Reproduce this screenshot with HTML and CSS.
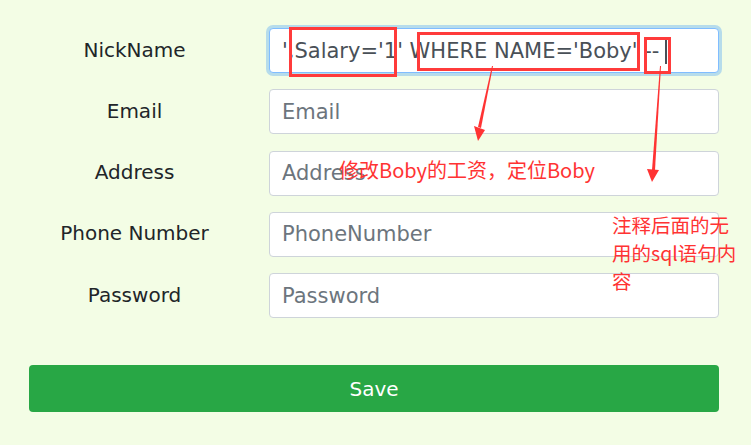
FILE: index.html
```html
<!DOCTYPE html>
<html>
<head>
<meta charset="utf-8">
<link rel="stylesheet" href="styles.css">
</head>
<body>
<div class="page">
  <form class="form">
    <div class="row">
      <label class="label">NickName</label>
      <input class="input focus" type="text" value="',Salary='1' WHERE NAME='Boby' -- ">
    </div>
    <div class="row">
      <label class="label">Email</label>
      <input class="input" type="text" placeholder="Email">
    </div>
    <div class="row">
      <label class="label">Address</label>
      <input class="input" type="text" placeholder="Address">
    </div>
    <div class="row">
      <label class="label">Phone Number</label>
      <input class="input" type="text" placeholder="PhoneNumber">
    </div>
    <div class="row">
      <label class="label">Password</label>
      <input class="input" type="text" placeholder="Password">
    </div>
    <button class="save" type="button">Save</button>
  </form>

  <span class="caret"></span>
  <div class="box box1"></div>
  <div class="box box2"></div>
  <div class="box box3"></div>
  <svg class="arrows" width="751" height="445" viewBox="0 0 751 445">
    <polygon points="492,66 493,66 481,128 478,127" fill="#ff3333"/>
    <polygon points="474,126 485,130 478,141" fill="#ff3333"/>
    <polygon points="660,66 661,66 655,170 652,170" fill="#ff3333"/>
    <polygon points="647,169 659,170 652,182" fill="#ff3333"/>
  </svg>
  <div class="note note1">修改Boby的工资，定位Boby</div>
  <div class="note note2">注释后面的无用的sql语句内容</div>
</div>
</body>
</html>
```
FILE: styles.css
```css
html, body {
  margin: 0;
  padding: 0;
}
body {
  background: #f3fde5;
  font-family: "DejaVu Sans", sans-serif;
  width: 751px;
  height: 445px;
  overflow: hidden;
}
.page {
  position: relative;
  width: 751px;
  height: 445px;
}
.form {
  display: flex;
  flex-direction: column;
  padding: 28px 32px 0 0;
  gap: 16.25px;
}
.row {
  display: flex;
  align-items: center;
  height: 45px;
}
.label {
  width: 269px;
  text-align: center;
  font-size: 20px;
  color: #212529;
  margin-top: -2px;
}
.input {
  box-sizing: border-box;
  width: 450px;
  height: 45px;
  border: 1px solid #ced4da;
  border-radius: 4px;
  background: #fff;
  padding: 0 12px;
  font-family: "DejaVu Sans", sans-serif;
  font-size: 21px;
  color: #495057;
  outline: none;
}
.input::placeholder {
  color: #6c757d;
  opacity: 1;
}
.input.focus {
  border-color: #80bdff;
  box-shadow: 0 0 0 3px rgba(0, 123, 255, 0.25);
}
.save {
  margin: 31px 0 0 29px;
  width: 690px;
  height: 47px;
  border: none;
  border-radius: 4px;
  background: #28a745;
  color: #fff;
  font-family: "DejaVu Sans", sans-serif;
  font-size: 20px;
}
.caret {
  position: absolute;
  left: 665px;
  top: 39px;
  width: 2px;
  height: 25px;
  background: #495057;
}
.box {
  position: absolute;
  box-sizing: border-box;
  border: 3px solid #ff3b3b;
}
.box1 { left: 289px; top: 27px; width: 108px; height: 50px; }
.box2 { left: 417px; top: 32px; width: 223px; height: 39px; }
.box3 { left: 644px; top: 37px; width: 27px; height: 37px; }
.arrows {
  position: absolute;
  left: 0;
  top: 0;
}
.note {
  position: absolute;
  color: #ff3333;
  font-family: "Noto Sans CJK SC", "DejaVu Sans", sans-serif;
  font-weight: 400;
  font-size: 20px;
  line-height: 28px;
}
.note1 { left: 339px; top: 156px; white-space: nowrap; }
.note2 { left: 612px; top: 211px; width: 126px; font-size: 19.5px; }
```
